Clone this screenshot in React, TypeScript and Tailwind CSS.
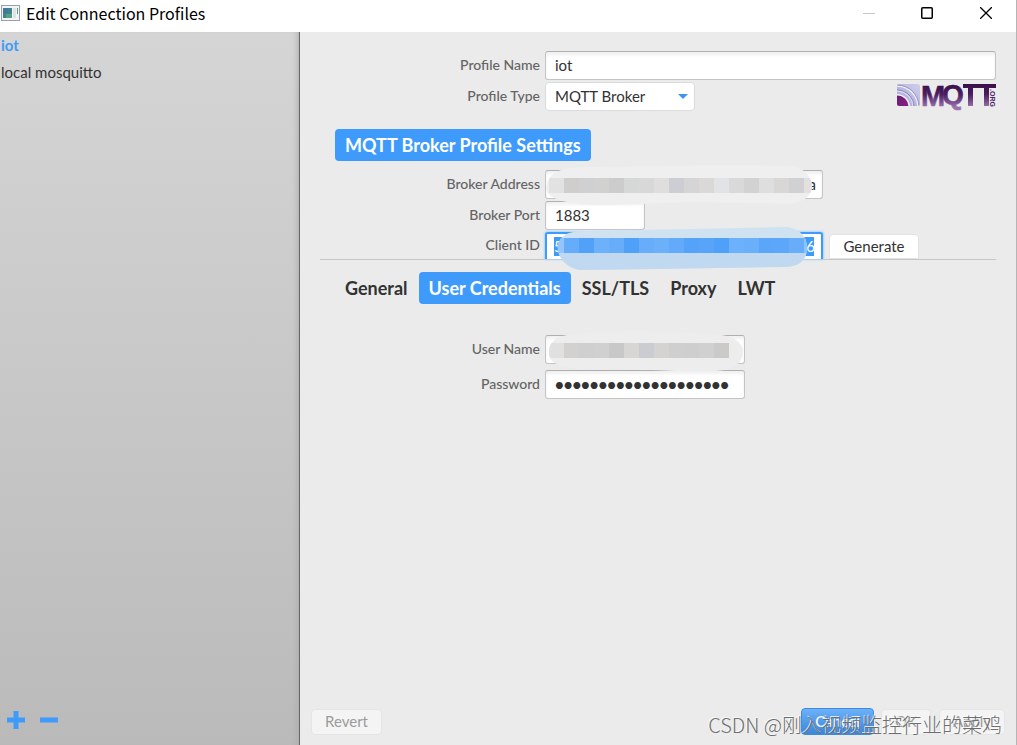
import React from "react";

const inputBox =
  "block h-[29px] rounded-[3px] border border-[#c4c4c4] border-t-[#b0b0b0] bg-white px-[9px] pb-0.5 text-[15px] text-[#323232] shadow-[inset_0_3px_3px_#f1f1f1] outline-none";
const plainButton = "rounded-[4px] border border-[#e2e2e2] bg-white text-[15px] text-[#323232]";
const disabledButton = "h-[26px] rounded-[4px] border border-[#e5e5e5] bg-[#f4f4f4] text-[15px] text-[#9b9b9b]";

type RowProps = {
  id: string;
  label: string;
  children: React.ReactNode;
};

function Row({ id, label, children }: RowProps) {
  return (
    <div className="flex items-center gap-[5px]">
      <label htmlFor={id} className="w-[220px] shrink-0 pb-0.5 text-right text-[14px] leading-5 font-medium text-[#646464]">
        {label}
      </label>
      {children}
    </div>
  );
}

type SmudgeProps = {
  id: string;
  shape: string;
  fill: string;
  colors: string[];
  top: number;
  className: string;
  lower?: string;
};

// Brushed cover with a strip of 15px blocks
function Smudge({ id, shape, fill, colors, top, className, lower }: SmudgeProps) {
  return (
    <svg className={className} aria-hidden="true">
      <clipPath id={id}>
        <path d={shape} />
      </clipPath>
      <g clipPath={`url(#${id})`}>
        <rect width="100%" height="100%" fill={fill} />
        {lower && <rect y={top + 15} width="100%" height="30" fill={lower} />}
        {colors.map((c, i) => (
          <rect key={i} x={4 + i * 15} y={top} width="15" height="15" fill={c} />
        ))}
      </g>
    </svg>
  );
}

function MqttLogo() {
  return (
    <svg className="mt-px overflow-visible" width="100" height="24" viewBox="0 0 100 24" aria-label="MQTT.ORG" role="img">
      <defs>
        <linearGradient id="wave" x1="0" y1="1" x2="1" y2="0">
          <stop offset="0" stopColor="#a9a5d6" />
          <stop offset="1" stopColor="#cfcfea" />
        </linearGradient>
        <linearGradient id="core" x1="0" y1="0" x2="1" y2="1">
          <stop offset="0" stopColor="#5d1a68" />
          <stop offset="1" stopColor="#95218c" />
        </linearGradient>
        <linearGradient id="ink" gradientUnits="userSpaceOnUse" x1="0" y1="1" x2="0" y2="24">
          <stop offset="0" stopColor="#391049" />
          <stop offset="0.45" stopColor="#4b1d62" />
          <stop offset="1" stopColor="#9a72ae" />
        </linearGradient>
        <clipPath id="tile">
          <rect x="1" y="1" width="23" height="22" rx="2" />
        </clipPath>
      </defs>
      <g clipPath="url(#tile)">
        <rect x="1" y="1" width="23" height="22" fill="url(#wave)" />
        <circle cx="1" cy="24" r="21" fill="none" stroke="#f0f0fa" strokeWidth="1.5" />
        <circle cx="1" cy="24" r="22" fill="none" stroke="#8583bc" strokeWidth="0.8" />
        <circle cx="1" cy="24" r="17" fill="none" stroke="#8583bc" strokeWidth="1" />
        <circle cx="1" cy="24" r="16" fill="none" stroke="#e4e4f4" strokeWidth="1" />
        <circle cx="1" cy="24" r="13" fill="#f0f0f8" />
        <circle cx="1" cy="24" r="11.5" fill="url(#core)" />
      </g>
      <g
        fill="url(#ink)"
        stroke="url(#ink)"
        strokeWidth="0.6"
        fontFamily="Liberation Sans, sans-serif"
        fontWeight="700"
      >
        <text x="25" y="22.5" fontSize="29">M</text>
        <text x="46" y="21" fontSize="28">Q</text>
      </g>
      <path d="M67 1h33v4h-7v18h-5V5H77v18h-5V5h-5z" fill="url(#ink)" />
      <text
        transform="translate(94 6) rotate(90)"
        fill="#4b1d62"
        fontFamily="Liberation Sans, sans-serif"
        fontWeight="700"
        fontSize="7"
      >
        .ORG
      </text>
    </svg>
  );
}

function TitleBar() {
  return (
    <header className="flex h-8 shrink-0 items-start bg-white">
      <svg className="mt-[5px] ml-px" width="19" height="16" aria-hidden="true">
        <rect x="0.5" y="0.5" width="18" height="15" fill="#f3f4f6" stroke="#9aa0a8" />
        <rect x="2" y="3" width="9" height="10" fill="#3f8488" />
        <rect x="2" y="3" width="5" height="5" fill="#4575a0" />
        <rect x="5" y="9" width="6" height="4" fill="#55a184" />
        <rect x="12" y="3" width="3" height="10" fill="#dfe3e8" />
        <rect x="16" y="3" width="1" height="6" fill="#55a184" />
      </svg>
      <h1 className="ml-1.5 font-['Noto_Sans_CJK_SC',sans-serif] text-[16px] leading-[26px] text-black">
        Edit Connection Profiles
      </h1>
      <div className="ml-auto flex h-[26px] pr-3">
        <button type="button" aria-label="Minimize" disabled className="flex w-9 items-center justify-center">
          <svg width="12" height="12">
            <path d="M0 6.5h12" stroke="#c8c8c8" />
          </svg>
        </button>
        <button type="button" aria-label="Maximize" className="ml-[22px] flex w-9 items-center justify-center">
          <svg width="12" height="12">
            <rect x="0.75" y="0.75" width="10.5" height="10.5" rx="1" fill="none" stroke="#000" strokeWidth="1.5" />
          </svg>
        </button>
        <button type="button" aria-label="Close" className="ml-[23px] flex w-9 items-center justify-center">
          <svg width="12" height="12">
            <path d="M0 0l12 12M12 0L0 12" stroke="#000" strokeWidth="1.3" />
          </svg>
        </button>
      </div>
    </header>
  );
}

function Sidebar() {
  return (
    <aside className="flex w-[300px] shrink-0 flex-col justify-between border-r border-[#666] bg-linear-to-b from-[#d5d5d5] to-[#bababa] shadow-[inset_-6px_0_6px_-5px_#a8a8a8]">
      <ul className="pl-px text-[15px] leading-[27px] text-[#323232]">
        <li className="font-bold text-[#3f9bfb]">iot</li>
        <li>local mosquitto</li>
      </ul>
      <div className="flex gap-[15px] pb-4 pl-[7px]">
        <button type="button" aria-label="Add profile">
          <svg width="18" height="18">
            <path d="M6.5 0h5v6.500h6.500v5h-6.500v6.500h-5v-6.500H0v-5h6.500z" fill="#3f9bfb" />
          </svg>
        </button>
        <button type="button" aria-label="Remove profile">
          <svg width="18" height="18">
            <rect y="6.500" width="18" height="5" fill="#3f9bfb" />
          </svg>
        </button>
      </div>
    </aside>
  );
}

const tabs = ["General", "User Credentials", "SSL/TLS", "Proxy", "LWT"];

const addressBlocks = ["#e2e2e2", "#cfcecc", "#d0d0d2", "#d1d1cf", "#cccccc", "#d6d8d7", "#d8d8d8", "#dfdedc", "#cdced3", "#d5d5d5", "#dad9d7", "#e1e3e6", "#d9d9d9", "#d2d2d2", "#dedede", "#d8d7d5", "#d1d1d3", "#e2e1df"];
const clientBlocks = ["#96c5fa", "#65acfa", "#51a1f9", "#6eb1fb", "#67adfa", "#4fa0f9", "#68adfa", "#6cb0fa", "#63aafa", "#54a3f9", "#57a4f9", "#4fa0f9", "#6cb1fb", "#6aaffa", "#5ba6f9", "#5ca7f9", "#68adfa", "#8fc1fa"];
const userBlocks = ["#e0e0e0", "#d2d1cf", "#cfcfcf", "#d0d0d0", "#c8c8c8", "#d7d6d4", "#c9ccd0", "#d4d3d1", "#cfcfcf", "#cecece", "#d0d0d0", "#cccac8"];

export default function App() {
  return (
    <div className="relative flex h-screen flex-col overflow-hidden border-r border-[#b5b5b5] bg-[#ebebeb] font-[Lato,sans-serif]">
      <TitleBar />
      <div className="flex min-h-0 flex-1">
        <Sidebar />

        <main className="flex min-w-0 flex-1 flex-col">
          <div className="px-5 pt-[19px]">
            <Row id="name" label="Profile Name">
              <input id="name" defaultValue="iot" className={`${inputBox} min-w-0 flex-1`} />
            </Row>
            <div className="mt-0.5 flex items-start justify-between">
              <Row id="type" label="Profile Type">
                <div className="relative">
                  <select
                    id="type"
                    className="block h-[29px] w-[150px] appearance-none rounded-[4px] border border-[#dcdcdc] bg-white px-[9px] text-[15px] text-[#323232] outline-none"
                  >
                    <option>MQTT Broker</option>
                  </select>
                  <svg className="pointer-events-none absolute top-3 right-[7px]" width="10" height="5">
                    <path d="M0 0h10L5 5z" fill="#3d95ee" />
                  </svg>
                </div>
              </Row>
              <MqttLogo />
            </div>

            {/* Broker settings */}
            <h2 className="mt-[18px] ml-[15px] w-fit rounded-[4px] bg-[#3f9bfb] px-2.5 text-[18px] leading-8 font-bold text-white">
              MQTT Broker Profile Settings
            </h2>
            <div className="mt-[9px] flex flex-col gap-0.5 border-b border-[#c6c6c6]">
              <Row id="address" label="Broker Address">
                <div className="relative">
                  <input id="address" defaultValue="a" className={`${inputBox} w-[278px] pr-1.5 text-right`} />
                  <Smudge
                    id="address-cover"
                    className="pointer-events-none absolute -top-1.5 left-0 z-10 h-[42px] w-[280px]"
                    shape="M2 20C5 8 16 2 50 3L180 1L245 2C258 3 267 12 267 22C267 32 258 39 242 40L150 38L70 41C30 42 3 37 1 25z"
                    fill="#efefef"
                    colors={addressBlocks}
                    top={14}
                  />
                </div>
              </Row>
              <Row id="port" label="Broker Port">
                <input id="port" defaultValue="1883" className={`${inputBox} w-[100px]`} />
              </Row>
              <Row id="client" label="Client ID">
                <div className="relative">
                  <div className="flex h-[27px] w-[278px] items-center rounded-t-[3px] border-2 border-b-0 border-[#3f9bfb] bg-white px-[7px] shadow-[0_0_2px_1px_#a9d3fb]">
                    <input
                      id="client"
                      defaultValue="500000000000000000000000000006"
                      className="h-[19px] w-full min-w-0 bg-[#3f9bfb] text-[15px] text-white outline-none"
                    />
                  </div>
                  <Smudge
                    id="client-cover"
                    className="pointer-events-none absolute -top-1.5 left-0 z-10 h-[46px] w-[280px]"
                    shape="M13 18C18 6 27 5 45 5L240 1C253 1 262 10 262 21C262 35 254 41 238 41L110 43L35 44C21 42 11 30 13 18z"
                    fill="#cfe2f2"
                    lower="#c0d9f1"
                    colors={clientBlocks}
                    top={12}
                  />
                </div>
                <button type="button" className={`${plainButton} mt-0.5 ml-px h-[25px] w-[90px] rounded-b-none`}>
                  Generate
                </button>
              </Row>
            </div>

            <nav className="mt-3 ml-[15px] flex gap-px">
              {tabs.map((tab) => (
                <button
                  key={tab}
                  type="button"
                  className={
                    tab === "User Credentials"
                      ? "rounded-[4px] bg-[#3f9bfb] px-2.5 text-[18px] leading-8 font-bold text-white"
                      : "px-2.5 text-[18px] leading-8 font-bold text-[#323232]"
                  }
                >
                  {tab}
                </button>
              ))}
            </nav>

            <div className="mt-[31px] flex flex-col gap-1.5">
              <Row id="user" label="User Name">
                <div className="relative">
                  <input id="user" className={`${inputBox} w-[200px]`} />
                  <Smudge
                    id="user-cover"
                    className="pointer-events-none absolute -top-[5px] left-0 z-10 h-[44px] w-[202px]"
                    shape="M4 20C7 8 13 4 50 2L90 1L150 3C180 3 196 8 198 20C198 30 194 36 180 40C150 44 120 39 60 39C20 40 2 36 4 20z"
                    fill="#ededed"
                    colors={userBlocks}
                    top={13}
                  />
                </div>
              </Row>
              <Row id="password" label="Password">
                <input
                  id="password"
                  type="password"
                  defaultValue="abcdefghijklmnopqrst"
                  className={`${inputBox} w-[200px] font-black`}
                />
              </Row>
            </div>
          </div>

          {/* Dialog actions */}
          <footer className="mt-auto flex items-center pr-[11px] pb-2.5 pl-[11px]">
            <button type="button" disabled className={`${disabledButton} w-[71px]`}>
              Revert
            </button>
            <button
              type="button"
              className="ml-auto h-[27px] w-[73px] rounded-[4px] border border-[#3d8ce0] bg-linear-to-b from-[#6bb1fa] to-[#3c86d8] text-[15px] text-white"
            >
              Cancel
            </button>
            <button type="button" disabled className={`${disabledButton} ml-[7px] w-[50px]`}>
              OK
            </button>
            <button type="button" disabled className={`${disabledButton} ml-2 w-[66px]`}>
              Apply
            </button>
          </footer>
        </main>
      </div>

      <p className="pointer-events-none absolute right-[14px] bottom-1.5 font-['Noto_Sans_CJK_SC',sans-serif] text-[20px] leading-7 font-light text-[#6e6e6e] [text-shadow:-1px_-1px_0_#ffffffc0]">
        CSDN @刚入视频监控行业的菜鸡
      </p>
    </div>
  );
}
